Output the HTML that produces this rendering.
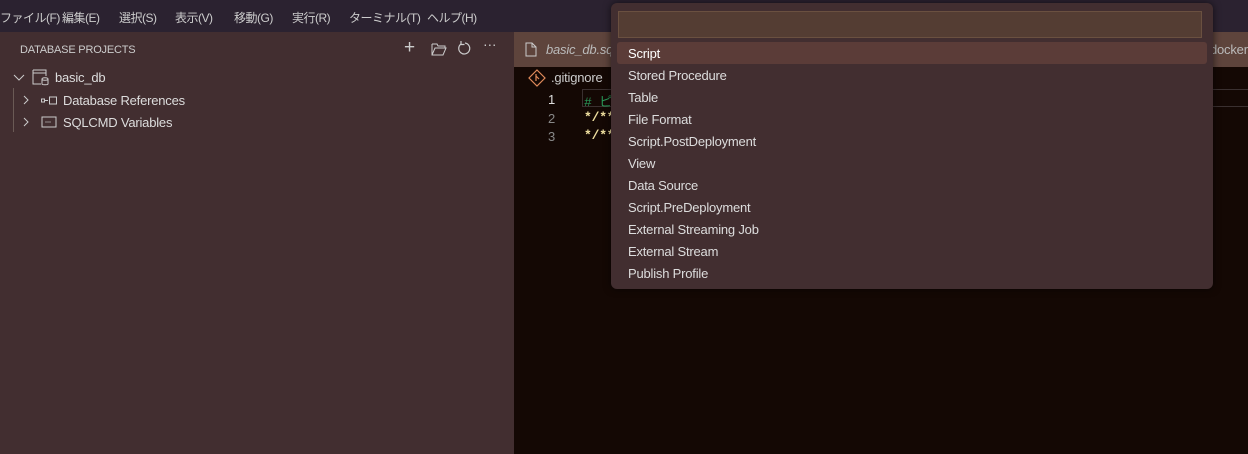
<!DOCTYPE html>
<html><head><meta charset="utf-8"><style>
*{margin:0;padding:0;box-sizing:border-box}
body{width:1248px;height:454px;overflow:hidden;background:#140804;font-family:"Segoe UI","Liberation Sans","Noto Sans CJK JP",sans-serif;font-size:13px;color:#ccc;position:relative;letter-spacing:-0.2px}
.title{position:absolute;left:0;top:0;width:1248px;height:32px;background:#2b2230;color:#ccc}
.title span{position:absolute;top:9px;font-size:12px;letter-spacing:-0.5px}
.side{position:absolute;left:0;top:32px;width:514px;height:422px;background:#422e30}
.tabs{position:absolute;left:514px;top:32px;width:734px;height:35px;background:#5e443c}
.ab{position:absolute}
.qp{position:absolute;left:611px;top:3px;width:602px;height:286px;background:#422e30;border-radius:6px;box-shadow:0 0 8px rgba(0,0,0,.6)}
.inp{position:absolute;left:7px;top:8px;width:584px;height:27px;background:#543d33;border:1px solid #6a5040}
.it{position:absolute;left:17px;font-size:13px;color:#ddd}
.sel{position:absolute;left:6px;top:39px;width:590px;height:22px;background:#5b3c38;border-radius:3px}
</style></head><body>
<div class="title">
<span style="left:0">ファイル(F)</span><span style="left:62px">編集(E)</span><span style="left:119px">選択(S)</span><span style="left:175px">表示(V)</span><span style="left:234px">移動(G)</span><span style="left:292px">実行(R)</span><span style="left:349px">ターミナル(T)</span><span style="left:427px">ヘルプ(H)</span>
</div>
<div class="side">
<div class="ab" style="left:20px;top:12px;font-size:11px;color:#ccc">DATABASE PROJECTS</div>
<div class="ab" style="left:404px;top:7px;font-size:19px;color:#ccc;line-height:18px">+</div>
<svg class="ab" style="left:431px;top:10px" width="16" height="14" viewBox="0 0 16 14" fill="none" stroke="#ccc"><path d="M1 2h5l1 2h7v2M1 2v11h11l3-7H4l-3 7"/></svg>
<svg class="ab" style="left:457px;top:9px" width="15" height="15" viewBox="0 0 15 15" fill="none" stroke="#ccc" stroke-width="1.2"><path d="M4 3a5.5 5.5 0 1 0 4-1"/><path d="M4 0v3.5h3.5"/></svg>
<div class="ab" style="left:483px;top:4px;font-size:14px;color:#ccc">···</div>
<svg class="ab" style="left:13px;top:41px" width="12" height="10" viewBox="0 0 12 10" fill="none" stroke="#ccc"><path d="M1 2l5 5 5-5"/></svg>
<svg class="ab" style="left:32px;top:37px" width="18" height="17" viewBox="0 0 18 17" fill="none" stroke="#ccc"><path d="M1 1h13v6M1 1v14h8M1 4h13"/><ellipse cx="13" cy="10" rx="3" ry="1.3"/><path d="M10 10v5c0 1 6 1 6 0v-5"/></svg>
<div class="ab" style="left:55px;top:38px;font-size:13px;color:#ddd">basic_db</div>
<div class="ab" style="left:13px;top:56px;width:1px;height:44px;background:#6a5a55"></div>
<svg class="ab" style="left:22px;top:63px" width="8" height="10" viewBox="0 0 8 10" fill="none" stroke="#ccc"><path d="M2 1l4 4-4 4"/></svg>
<svg class="ab" style="left:40px;top:64px" width="18" height="9" viewBox="0 0 18 9" fill="none" stroke="#ccc"><rect x="1.5" y="3" width="3" height="3"/><path d="M5 4.5h3"/><rect x="9.5" y="1" width="7" height="7"/></svg>
<div class="ab" style="left:63px;top:61px;color:#ddd">Database References</div>
<svg class="ab" style="left:22px;top:85px" width="8" height="10" viewBox="0 0 8 10" fill="none" stroke="#ccc"><path d="M2 1l4 4-4 4"/></svg>
<svg class="ab" style="left:41px;top:84px" width="16" height="12" viewBox="0 0 16 12" fill="none" stroke="#ccc"><rect x="1" y="1" width="14" height="10"/><path d="M4 6h6" stroke-width=".6"/></svg>
<div class="ab" style="left:63px;top:83px;color:#ddd">SQLCMD Variables</div>
</div>
<div class="tabs">
<svg class="ab" style="left:11px;top:10px" width="12" height="15" viewBox="0 0 12 15" fill="none" stroke="#ccc"><path d="M1 1h6l4 4v9H1zM7 1v4h4"/></svg>
<div class="ab" style="left:32px;top:10px;font-style:italic;color:#bbb">basic_db.sql</div>
<div class="ab" style="left:696px;top:10px;color:#bbb">docker-</div>
</div>
<svg class="ab" style="left:528px;top:69px" width="18" height="18" viewBox="0 0 18 18" fill="none" stroke="#e08a5a" stroke-width="1.2"><path d="M9 1l8 8-8 8-8-8z"/><path d="M8 5v7M8 7l3 3"/></svg>
<div class="ab" style="left:551px;top:70px;color:#ccc">.gitignore</div>
<div class="ab" style="left:548px;top:92px;color:#ddd">1</div>
<div class="ab" style="left:548px;top:111px;color:#888">2</div>
<div class="ab" style="left:548px;top:129px;color:#888">3</div>
<div class="ab" style="left:582px;top:89px;width:700px;height:18px;border:1px solid #3a3030"></div>
<div class="ab" style="left:584px;top:91px;color:#2a9a5a;font-family:'Liberation Mono',monospace"># ピ</div>
<div class="ab" style="left:584px;top:110px;color:#f0e0a0;font-family:'Liberation Mono',monospace;font-weight:bold">*/**</div>
<div class="ab" style="left:584px;top:128px;color:#f0e0a0;font-family:'Liberation Mono',monospace;font-weight:bold">*/**</div>
<div class="qp">
<div class="inp"></div>
<div class="sel"></div>
<div class="it" style="top:43px;color:#fff">Script</div>
<div class="it" style="top:65px">Stored Procedure</div>
<div class="it" style="top:87px">Table</div>
<div class="it" style="top:109px">File Format</div>
<div class="it" style="top:131px">Script.PostDeployment</div>
<div class="it" style="top:153px">View</div>
<div class="it" style="top:175px">Data Source</div>
<div class="it" style="top:197px">Script.PreDeployment</div>
<div class="it" style="top:219px">External Streaming Job</div>
<div class="it" style="top:241px">External Stream</div>
<div class="it" style="top:263px">Publish Profile</div>
</div>
</body></html>
